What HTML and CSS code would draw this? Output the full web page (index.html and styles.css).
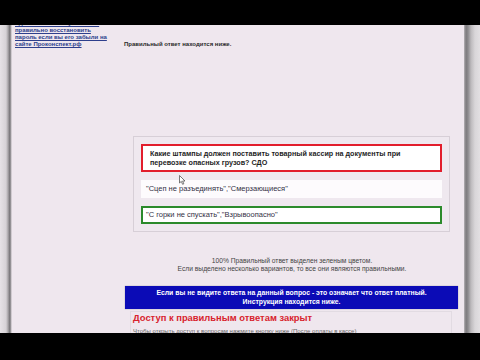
FILE: index.html
```html
<!DOCTYPE html>
<html lang="ru">
<head>
<meta charset="utf-8">
<link rel="stylesheet" href="styles.css">
</head>
<body>
<div class="screen">
  <div class="bar-top"></div>
  <div class="middle">
    <div class="edge-left"></div>
    <div class="page">
      <aside class="side">
        <a class="side-link">Здесь вы можете узнать как</a>
        <a class="side-link">правильно восстановить</a>
        <a class="side-link">пароль если вы его забыли на</a>
        <a class="side-link">сайте Проконспект.рф</a>
      </aside>
      <main class="main">
        <p class="note">Правильный ответ находится ниже.</p>
        <section class="card">
          <div class="question">Какие штампы должен поставить товарный кассир на документы при перевозке опасных грузов? СДО</div>
          <div class="answer">"Сцеп не разъединять","Смерзающиеся"</div>
          <div class="answer correct">"С горки не спускать","Взрывоопасно"</div>
          <svg class="cursor" width="7" height="10" viewBox="0 0 7 10"><path d="M0.5 0.5 L0.5 8 L2.3 6.4 L3.6 9.3 L4.8 8.8 L3.6 6 L6 6 Z" fill="#fff" stroke="#555" stroke-width="0.8"/></svg>
        </section>
        <p class="result">100% Правильный ответ выделен зеленым цветом.<br>Если выделено несколько вариантов, то все они являются правильными.</p>
        <div class="banner">Если вы не видите ответа на данный вопрос - это означает что ответ платный.<br>Инструкция находится ниже.</div>
        <section class="access">
          <h2 class="access-title">Доступ к правильным ответам закрыт</h2>
          <p class="access-text">Чтобы открыть доступ к вопросам нажмите кнопку ниже (После оплаты в кассе)</p>
        </section>
      </main>
    </div>
    <div class="edge-right"></div>
  </div>
  <div class="bar-bottom"></div>
</div>
</body>
</html>
```

FILE: styles.css
```css
* { box-sizing: border-box; }
html, body { margin: 0; padding: 0; }
body {
  background: #000;
  font-family: "Liberation Sans", Arial, sans-serif;
  width: 480px;
  height: 360px;
  overflow: hidden;
}
.screen {
  display: flex;
  flex-direction: column;
  width: 480px;
  height: 360px;
}
.bar-top { height: 25px; background: #000; flex: none; }
.bar-bottom { flex: 1; background: #000; }
.middle {
  height: 308px;
  flex: none;
  display: flex;
}
.edge-left {
  width: 12px;
  flex: none;
  background: linear-gradient(to right, #e6e2e6 0, #d6d2d6 6px, #a9a6a9 8px, #6f6d70 10px, #b8b4b8 11px, #e9e1e8 12px);
}
.edge-right {
  width: 16px;
  flex: none;
  background: linear-gradient(to right, #b6b2b6 0, #7d7b7e 2px, #8c8a8d 4px, #bdbabd 7px, #d9d6d9 11px, #e2dfe2 16px);
}
.page {
  flex: 1;
  background: #efe7ee;
  display: flex;
  overflow: hidden;
}
.side {
  width: 108px;
  flex: none;
  padding-left: 3px;
  margin-top: -5px;
  display: flex;
  flex-direction: column;
}
.side-link {
  font-size: 6px;
  line-height: 7px;
  font-weight: bold;
  color: #2d3f8c;
  text-decoration: underline;
  white-space: nowrap;
}
.main {
  flex: 1;
  display: flex;
  flex-direction: column;
  position: relative;
}
.note {
  margin: 15px 0 0 4px;
  font-size: 6px;
  line-height: 8px;
  font-weight: bold;
  color: #2a2a2a;
}
.card {
  position: relative;
  margin: 88px 0 0 13px;
  width: 317px;
  border: 1px solid #d7cfd7;
  background: #efe8ef;
  padding: 7px;
  display: flex;
  flex-direction: column;
  gap: 8px;
}
.question {
  border: 2px solid #e21d2c;
  background: #fff;
  padding: 3px 7px;
  font-size: 7.2px;
  line-height: 9px;
  font-weight: bold;
  color: #1e1e1e;
}
.answer {
  background: #fdfbfd;
  padding: 4px 5px;
  font-size: 7.5px;
  line-height: 10px;
  color: #333046;
}
.answer.correct {
  border: 2px solid #2b8a2b;
  padding: 2px 3px;
  background: #fff;
}
.cursor {
  position: absolute;
  left: 45px;
  top: 38px;
}
.result {
  margin: 25px 0 0;
  text-align: center;
  font-size: 6.7px;
  line-height: 7.5px;
  color: #444;
}
.banner {
  margin: 14px 6px 0 5px;
  background: #0b0bb6;
  color: #fff;
  text-align: center;
  font-weight: bold;
  font-size: 6.85px;
  line-height: 8.5px;
  padding: 3px 4px;
  box-shadow: 0 0 1px #888;
}
.access {
  margin: 2px 12px 0 10px;
  border: 1px solid #e2dbe2;
  padding: 0 2px;
}
.access-title {
  margin: 0;
  font-size: 9.4px;
  line-height: 12px;
  font-weight: bold;
  color: #d8232d;
}
.access-text {
  margin: 3px 0 0;
  font-size: 6px;
  line-height: 8px;
  color: #666;
}
```
